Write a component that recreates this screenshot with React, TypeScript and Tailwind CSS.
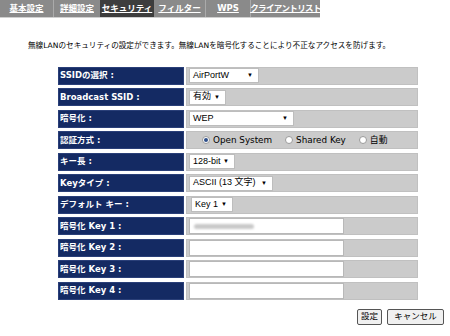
import { useState } from "react";

const font = { fontFamily: '"DejaVu Sans", "Noto Sans CJK JP", sans-serif' };

const tabs = [
  { label: "基本設定", w: "w-[53px]" },
  { label: "詳細設定", w: "w-[47px]" },
  { label: "セキュリティ", w: "w-[54px]" },
  { label: "フィルター", w: "w-[51px]" },
  { label: "WPS", w: "w-[45px]" },
  { label: "クライアントリスト", w: "w-[70px] tracking-[-0.6px]" },
];

function Select({ value, w }: { value: string; w: string }) {
  return (
    <div
      className={`${w} h-[15px] bg-white border border-[#bdbdbd] flex items-center justify-between pl-[3px] pr-[5px] text-[9px] text-black whitespace-nowrap`}
      style={{ fontFamily: '"Liberation Sans", "Noto Sans CJK JP", sans-serif' }}
    >
      <span>{value}</span>
      <span className="text-[6px]">▼</span>
    </div>
  );
}

function Radio({ on, label }: { on?: boolean; label: string }) {
  return (
    <div className="flex items-center gap-[3px]">
      <span className="w-[8px] h-[8px] rounded-full border border-[#9a9a9a] bg-white flex items-center justify-center">
        {on && <span className="w-[4px] h-[4px] rounded-full bg-[#2d4f8a]" />}
      </span>
      <span>{label}</span>
    </div>
  );
}

function Input({ filled }: { filled?: boolean }) {
  return (
    <div className="w-[155px] h-[16px] bg-white border border-[#b8b8b8] flex items-center px-[4px]">
      {filled && <span className="w-[60px] h-[5px] rounded-full bg-[#c9c9c9] blur-[1px]" />}
    </div>
  );
}

export default function App() {
  const [tab] = useState("セキュリティ");

  const rows: { label: string; value: React.ReactNode }[] = [
    { label: "SSIDの選択 :", value: <Select value="AirPortW" w="w-[70px]" /> },
    { label: "Broadcast SSID :", value: <Select value="有効" w="w-[37px]" /> },
    { label: "暗号化 :", value: <Select value="WEP" w="w-[105px]" /> },
    {
      label: "認証方式 :",
      value: (
        <div className="flex items-center gap-[13px] pl-[13px] text-[8.8px] text-black" style={font}>
          <Radio on label="Open System" />
          <Radio label="Shared Key" />
          <Radio label="自動" />
        </div>
      ),
    },
    { label: "キー長 :", value: <Select value="128-bit" w="w-[46px]" /> },
    { label: "Keyタイプ :", value: <Select value="ASCII (13 文字)" w="w-[84px]" /> },
    {
      label: "デフォルト キー :",
      value: (
        <div className="pl-[2px]">
          <Select value="Key 1" w="w-[42px]" />
        </div>
      ),
    },
    { label: "暗号化 Key 1 :", value: <Input filled /> },
    { label: "暗号化 Key 2 :", value: <Input /> },
    { label: "暗号化 Key 3 :", value: <Input /> },
    { label: "暗号化 Key 4 :", value: <Input /> },
  ];

  return (
    <div className="w-[450px] h-[336px] bg-white overflow-hidden" style={font}>
      {/* Tabs */}
      <div className="w-[320px] h-[18px] bg-[#8a8a8a] flex border-b border-[#d0d0d0]">
        {tabs.map((t, i) => (
          <div
            key={t.label}
            className={`${t.w} shrink-0 h-full flex items-center justify-center text-[8.5px] font-bold text-white underline whitespace-nowrap ${
              t.label === tab ? "bg-[#3d3d3d]" : ""
            } ${i > 0 && t.label !== tab && tabs[i - 1].label !== tab ? "border-l border-[#aaaaaa]" : ""}`}
          >
            {t.label}
          </div>
        ))}
      </div>

      {/* Description */}
      <p className="mt-[24px] ml-[28px] text-[7.6px] text-black leading-none whitespace-nowrap">
        無線LANのセキュリティの設定ができます。無線LANを暗号化することにより不正なアクセスを防げます。
      </p>

      {/* Settings table */}
      <div className="mt-[17px] ml-[58px] grid grid-cols-[126px_232px] gap-x-[2px] gap-y-[3.5px]">
        {rows.map((r) => (
          <div key={r.label} className="contents">
            <div className="h-[18px] bg-[#142a63] border border-[#2a3f78] flex items-center pl-[1px] text-[8.5px] font-bold text-white whitespace-nowrap">
              {r.label}
            </div>
            <div className="h-[18px] bg-[#cbcbcb] border border-[#c0c0c0] flex items-center pl-[2px]">
              {r.value}
            </div>
          </div>
        ))}
      </div>

      {/* Buttons */}
      <div className="flex justify-end gap-[5px] pr-[6px] mt-[9px]">
        <button className="h-[16px] px-[3px] bg-[#f0f0f0] border border-[#555] rounded-[2px] text-[8.5px] text-black leading-none">
          設定
        </button>
        <button className="h-[16px] w-[57px] bg-[#f0f0f0] border border-[#555] rounded-[2px] text-[8.5px] text-black leading-none">
          キャンセル
        </button>
      </div>
    </div>
  );
}
